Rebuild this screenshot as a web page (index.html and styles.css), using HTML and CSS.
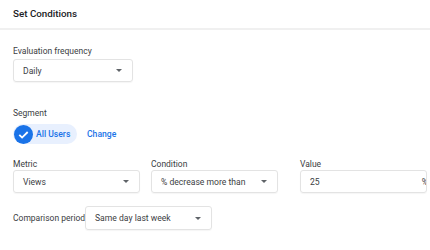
FILE: index.html
```html
<!DOCTYPE html>
<html>
<head>
<meta charset="utf-8">
<link rel="stylesheet" href="styles.css">
</head>
<body>
<div class="panel">
  <div class="header">Set Conditions</div>
  <div class="content">
    <div class="field freq">
      <div class="label">Evaluation frequency</div>
      <div class="select w-freq"><span>Daily</span><i class="arrow"></i></div>
    </div>
    <div class="field segment">
      <div class="label">Segment</div>
      <div class="seg-row">
        <div class="chip">
          <span class="check"><svg width="19" height="19" viewBox="0 0 19 19"><circle cx="9.5" cy="9.5" r="9.5" fill="#1a73e8"/><path d="M5.3 9.8l2.8 2.8 5.6-5.6" fill="none" stroke="#fff" stroke-width="1.8"/></svg></span>
          <span class="chip-text">All Users</span>
        </div>
        <span class="link">Change</span>
      </div>
    </div>
    <div class="row3">
      <div class="field col">
        <div class="label">Metric</div>
        <div class="select w-col"><span>Views</span><i class="arrow"></i></div>
      </div>
      <div class="field col">
        <div class="label">Condition</div>
        <div class="select w-col"><span>% decrease more than</span><i class="arrow"></i></div>
      </div>
      <div class="field col value">
        <div class="label">Value</div>
        <div class="select input w-col"><span>25</span><span class="pct">%</span></div>
      </div>
    </div>
    <div class="comp-row">
      <div class="label inline">Comparison period</div>
      <div class="select w-comp"><span>Same day last week</span><i class="arrow"></i></div>
    </div>
  </div>
</div>
</body>
</html>
```
FILE: styles.css
```css
html, body {
  margin: 0;
  padding: 0;
  background: #fff;
}
body {
  width: 430px;
  height: 250px;
  overflow: hidden;
  font-family: Roboto, "Liberation Sans", sans-serif;
  color: #3c4043;
}
.header {
  height: 30px;
  box-sizing: border-box;
  padding: 8px 13px 0;
  font-size: 9.8px;
  line-height: 12px;
  font-weight: 500;
  color: #202124;
  border-bottom: 2px solid #f0f0f0;
}
.content {
  padding: 16px 0 0 13px;
}
.label {
  font-size: 8.5px;
  line-height: 11px;
  color: #3c4043;
  white-space: nowrap;
}
.field .label {
  margin-bottom: 2px;
}
.select {
  box-sizing: border-box;
  height: 23px;
  border: 1px solid #e3e3e3;
  border-radius: 3px;
  box-shadow: 0 1px 1px rgba(0,0,0,0.04);
  display: flex;
  align-items: center;
  justify-content: space-between;
  padding: 0 9px 0 9px;
  font-size: 8.6px;
  color: #3c4043;
  overflow: hidden;
  white-space: nowrap;
}
.arrow {
  flex: none;
  width: 0;
  height: 0;
  border-left: 3.5px solid transparent;
  border-right: 3.5px solid transparent;
  border-top: 3.5px solid #5f6368;
  margin-right: 1px;
}
.w-freq { width: 120px; }
.w-col { width: 127px; }
.w-comp { width: 127px; }
.segment {
  margin-top: 26px;
}
.seg-row {
  display: flex;
  align-items: center;
  margin-top: 5px;
}
.chip {
  display: flex;
  align-items: center;
  height: 20px;
  width: 64px;
  box-sizing: border-box;
  padding-left: 1px;
  background: #e8f0fe;
  border-radius: 10px;
  white-space: nowrap;
}
.check {
  display: flex;
  width: 19px;
  height: 19px;
}
.chip-text {
  margin-left: 3px;
  font-size: 8.6px;
  font-weight: 500;
  color: #1a73e8;
}
.link {
  margin-left: 10px;
  font-size: 8.6px;
  font-weight: 500;
  color: #1a73e8;
}
.row3 {
  display: flex;
  margin-top: 15px;
}
.row3 .label {
  margin-bottom: 0;
}
.col + .col {
  margin-left: 11px;
}
.col.value {
  margin-left: 22px;
}
.input {
  padding-right: 0;
}
.pct {
  margin-right: -2px;
}
.comp-row {
  display: flex;
  align-items: center;
  margin-top: 13px;
}
.label.inline {
  width: 72px;
}
.comp-row .select {
  height: 24px;
}
```
